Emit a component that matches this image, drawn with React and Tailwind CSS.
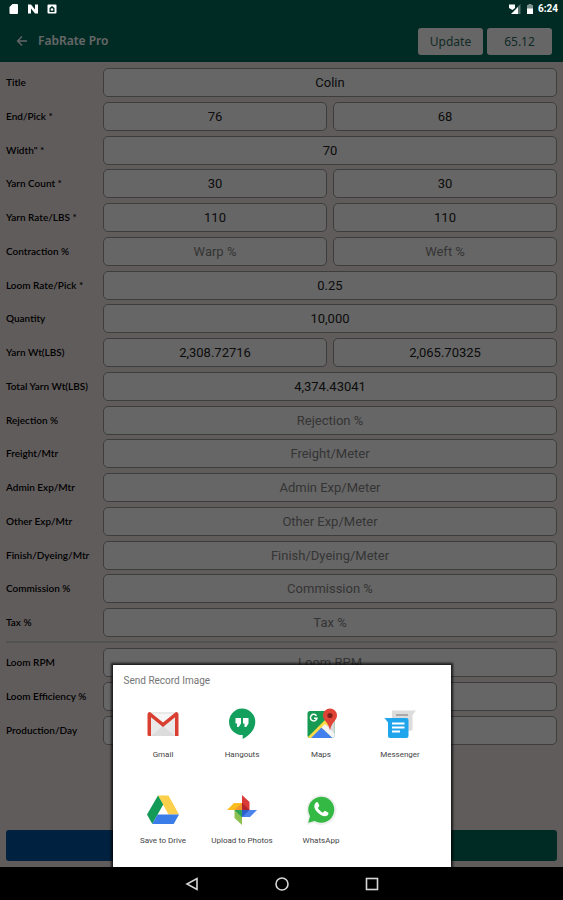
import { useState } from 'react';

const rateFields = [
  { label: 'Title', inputs: [{ value: 'Colin' }] },
  { label: 'End/Pick *', inputs: [{ value: '76' }, { value: '68' }] },
  { label: 'Width" *', inputs: [{ value: '70' }] },
  { label: 'Yarn Count *', inputs: [{ value: '30' }, { value: '30' }] },
  { label: 'Yarn Rate/LBS *', inputs: [{ value: '110' }, { value: '110' }] },
  { label: 'Contraction %', inputs: [{ hint: 'Warp %' }, { hint: 'Weft %' }] },
  { label: 'Loom Rate/Pick *', inputs: [{ value: '0.25' }] },
  { label: 'Quantity', inputs: [{ value: '10,000' }] },
  { label: 'Yarn Wt(LBS)', inputs: [{ value: '2,308.72716' }, { value: '2,065.70325' }] },
  { label: 'Total Yarn Wt(LBS)', inputs: [{ value: '4,374.43041' }] },
  { label: 'Rejection %', inputs: [{ hint: 'Rejection %' }] },
  { label: 'Freight/Mtr', inputs: [{ hint: 'Freight/Meter' }] },
  { label: 'Admin Exp/Mtr', inputs: [{ hint: 'Admin Exp/Meter' }] },
  { label: 'Other Exp/Mtr', inputs: [{ hint: 'Other Exp/Meter' }] },
  { label: 'Finish/Dyeing/Mtr', inputs: [{ hint: 'Finish/Dyeing/Meter' }] },
  { label: 'Commission %', inputs: [{ hint: 'Commission %' }] },
  { label: 'Tax %', inputs: [{ hint: 'Tax %' }] },
];

const loomFields = [
  { label: 'Loom RPM', inputs: [{ hint: 'Loom RPM' }] },
  { label: 'Loom Efficiency %', inputs: [{}] },
  { label: 'Production/Day', inputs: [{}] },
];

function Row({ label, inputs }) {
  const id = label.toLowerCase().replace(/[^a-z]+/g, '-');
  return (
    <div className="flex items-center">
      <label htmlFor={id} className="w-[97px] shrink-0 whitespace-nowrap font-[Lato,sans-serif] text-[10px] font-semibold text-black">{label}</label>
      <div className="flex flex-1 gap-1.5">
        {inputs.map((input, i) => (
          <Field key={i} id={i === 0 ? id : `${id}-${i}`} name={label} {...input} />
        ))}
      </div>
    </div>
  );
}

function Field({ id, name, value = '', hint }) {
  const [text, setText] = useState(value);
  return (
    <input
      id={id}
      aria-label={name}
      value={text}
      placeholder={hint}
      onChange={(e) => setText(e.target.value)}
      className="h-[29px] w-0 min-w-0 flex-1 rounded-[5px] border border-[#999999] bg-white text-center font-[Roboto,sans-serif] text-[13px] text-[#222222] placeholder:text-[#858585]"
    />
  );
}

function GmailIcon() {
  return (
    <svg viewBox="0 0 32 32" className="size-8">
      <rect x="1" y="4" width="30" height="24" rx="1.5" fill="#e9e9e9" />
      <path d="M4 28 16 18l12 10z" fill="#dcdcdc" />
      <path d="M4 6 16 17 28 6z" fill="#f6f6f6" />
      <path d="M0.500 6.500C.5 5 1.500 4 3 4l13 10.500L29 4c1.500 0 2.500 1 2.500 2.500V28H28V9.300L16 19 4 9.300V28H2A1.500 1.500 0 0 1 .5 26.500z" fill="#d93f31" />
    </svg>
  );
}

function HangoutsIcon() {
  return (
    <svg viewBox="0 0 32 32" className="size-8">
      <path d="M16 0.500a13.300 13.300 0 1 0 .7 26.600V31C24 27.500 29.300 21 29.300 13.800A13.300 13.300 0 0 0 16 .5z" fill="#12a05c" />
      <path d="M9.500 10h5.500v5.500L12.700 19h-1.700v-3.500H9.500zM17 10h5.500v5.500L20.200 19h-1.700v-3.500H17z" fill="#fff" />
    </svg>
  );
}

function MapsIcon() {
  return (
    <svg viewBox="0 0 32 32" className="size-8">
      <defs>
        <clipPath id="map-tile">
          <rect x="2.500" y="3" width="27" height="27" rx="2.500" />
        </clipPath>
      </defs>
      <g clipPath="url(#map-tile)">
        <path d="M2 2h28v28H2z" fill="#169a52" />
        <path d="M30 10v21L16.500 17.500z" fill="#d9d9dc" />
        <path d="M2 30 24 8l4 4L8 32z" fill="#fddb45" />
        <path d="M5.500 30.500 16.500 19.500 28 30.500z" fill="#4180ee" />
        <path d="M16.500 19.500 20 16l12 12v4h-2.500z" fill="#f4f4f4" />
      </g>
      <path d="M11.500 7.800A3.300 3.300 0 1 0 12 10.200H9" fill="none" stroke="#fff" strokeWidth="1.500" />
      <path d="M25 .5a7 7 0 0 0-7 7c0 5 5.500 6.500 7 15 1.500-8.500 7-10 7-15a7 7 0 0 0-7-7z" fill="#e04437" />
      <circle cx="25" cy="7.500" r="2.600" fill="#7d1f1a" />
    </svg>
  );
}

function MessengerIcon() {
  return (
    <svg viewBox="0 0 32 32" className="size-8">
      <path d="M8 2.500h24l-3.500 4.500v14a1.800 1.800 0 0 1-1.800 1.800H9.800A1.800 1.800 0 0 1 8 21z" fill="#dcdcdc" />
      <path d="M12 7h12" stroke="#999" strokeWidth="1.500" />
      <path d="M.5 10H22.500a2 2 0 0 1 2 2v16a2 2 0 0 1-2 2H6a2 2 0 0 1-2-2V14.500z" fill="#1fa5ec" />
      <path d="M8 15.500h12.500M8 19.500h12.500M8 23.500h8" stroke="#fff" strokeWidth="1.800" />
    </svg>
  );
}

function DriveIcon() {
  return (
    <svg viewBox="0 0 32 32" className="size-8">
      <path d="M11 1.500h10.500L32 20.500H21.500z" fill="#fdd04b" />
      <path d="M11 1.500 16.200 10.500 5.300 30 0 20.500z" fill="#139a57" />
      <path d="M10.500 20.500H32L26.700 30H5.300z" fill="#3b7de8" />
    </svg>
  );
}

function PhotosIcon() {
  return (
    <svg viewBox="0 0 32 32" className="size-8">
      <path d="M16 1l7.500 7v8H16z" fill="#db3b36" />
      <path d="M16 8.500 23.500 16H16z" fill="#b3272c" />
      <path d="M31 16l-7 7h-8v-7z" fill="#4a83ec" />
      <path d="M23.500 16 16 23v-7z" fill="#2c5fca" />
      <path d="M16 31l-7.500-7v-8H16z" fill="#8cc152" />
      <path d="M16 23.500 8.500 16H16z" fill="#2fa25a" />
      <path d="M1 16l7-7h8v7z" fill="#fbbc1f" />
      <path d="M8.500 16 16 9v7z" fill="#f2952a" />
    </svg>
  );
}

function WhatsAppIcon() {
  return (
    <svg viewBox="0 0 32 32" className="size-8">
      <path d="M1.500 31 3.500 23.500A15 15 0 1 1 9 29z" fill="#efefef" />
      <path d="M3.200 28.800 5 22.300A13 13 0 1 1 9.700 27z" fill="#33b944" />
      <path d="M11 8.500c.8-.8 1.700-.7 2.100.2l1.200 2.700c.3.700-1.300 2-1.300 2.500 0 .8 3.500 4.500 4.800 4.700.6.1 1.600-2 2.400-1.700l2.900 1.500c.8.400.2 2.300-.7 3-1.500 1.200-3.700 1-6.500-.4-3-1.500-5.500-4.500-6.300-6.900-.7-2.200-.2-4.200 1.400-5.600z" fill="#fff" />
    </svg>
  );
}

const apps = [
  { name: 'Gmail', Icon: GmailIcon },
  { name: 'Hangouts', Icon: HangoutsIcon },
  { name: 'Maps', Icon: MapsIcon },
  { name: 'Messenger', Icon: MessengerIcon },
  { name: 'Save to Drive', Icon: DriveIcon },
  { name: 'Upload to Photos', Icon: PhotosIcon },
  { name: 'WhatsApp', Icon: WhatsAppIcon },
];

function StatusBar() {
  return (
    <div className="absolute inset-x-0 top-0 z-10 flex h-[18px] items-center justify-between pl-[9px] pr-[5px] text-white">
      <div className="flex items-center gap-2">
        <svg viewBox="0 0 10 12" className="h-3 w-2.5" fill="currentColor">
          <path d="M3.500 1H8a1 1 0 0 1 1 1v8a1 1 0 0 1-1 1H1.500a1 1 0 0 1-1-1V4z" />
        </svg>
        <svg viewBox="0 0 12 12" className="size-3" fill="currentColor">
          <path d="M1 10.500v-9h3l4 5v-5h3v9H8l-4-5v5z" />
        </svg>
        <svg viewBox="0 0 10 12" className="h-3 w-2.5">
          <rect x="0.500" y="1.500" width="9" height="9" rx="1" fill="currentColor" />
          <path d="M2.500 5 5 3l2.500 2v4h-5z" fill="#002b25" />
          <circle cx="5" cy="6.500" r="1.300" fill="currentColor" />
        </svg>
      </div>
      <div className="flex items-center gap-1">
        <svg viewBox="0 0 14 12" className="h-3 w-3.5">
          <path d="M12.500 1v10H8V5.500z" fill="#59736f" />
          <path d="M10 4v7H3z" fill="currentColor" />
          <path d="M1 1.500h6v3.500L4.500 7 1 5z" fill="currentColor" />
        </svg>
        <svg viewBox="0 0 8 12" className="h-3 w-2">
          <path d="M1 2h1.500V1h3v1H7v9H1z" fill="#7d918e" />
          <path d="M1 5.500h6V11H1z" fill="currentColor" />
        </svg>
        <time className="font-[Roboto,sans-serif] text-[10px] font-bold leading-3">6:24</time>
      </div>
    </div>
  );
}

function ShareDialog() {
  return (
    <section role="dialog" aria-label="Send Record Image" className="w-[338px] bg-white px-[11px] pb-[21px] shadow-[0_0_2px_2px_rgba(0,0,0,0.7)]">
      <h2 className="pt-2 text-[10px] leading-4 text-[#757575]">Send Record Image</h2>
      <div className="grid grid-cols-4 gap-y-[34px] pt-[19px]">
        {apps.map(({ name, Icon }) => (
          <button key={name} className="flex flex-col items-center gap-2.5 whitespace-nowrap text-[8px] leading-[10px] text-[#444444]">
            <Icon />
            {name}
          </button>
        ))}
      </div>
    </section>
  );
}

export default function App() {
  return (
    <div className="relative flex h-screen min-h-[900px] flex-col bg-[#f0e6e6] font-['Noto_Sans',sans-serif]">
      <header className="flex h-[62px] items-end justify-between bg-[#006b5c] pb-[7px] pl-4 pr-[11px]">
        <div className="flex h-7 items-center gap-2.5">
          <button aria-label="Back">
            <svg viewBox="0 0 12 12" className="size-3" fill="none" stroke="#ffffff" strokeWidth="1.300">
              <path d="M11 6H1.500M6 1.500 1.500 6 6 10.500" />
            </svg>
          </button>
          <h1 className="text-[12px] font-semibold text-white">FabRate Pro</h1>
        </div>
        <div className="flex gap-1 text-[12px] text-[#2e6b62]">
          <button className="h-[27px] w-[65px] rounded-[3px] bg-white">Update</button>
          <button className="h-[27px] w-[65px] rounded-[3px] bg-white">65.12</button>
        </div>
      </header>

      <main className="flex flex-1 flex-col px-1.5">
        <div className="flex h-[575px] flex-col justify-between pt-1.5">
          {rateFields.map((f) => <Row key={f.label} {...f} />)}
        </div>
        <hr className="mt-1 mb-[5px] border-t-2 border-[#cccccc]" />
        <div className="flex flex-col gap-[5px]">
          {loomFields.map((f) => <Row key={f.label} {...f} />)}
        </div>
        <div className="mt-auto mb-1.5 flex gap-1.5">
          <button aria-label="Save" className="h-[31px] flex-1 rounded-[3px] bg-[#00539e]" />
          <button aria-label="Share" className="h-[31px] flex-1 rounded-[3px] bg-[#006b5c]" />
        </div>
      </main>

      <div className="absolute inset-0 flex items-end justify-center overflow-hidden bg-black/60 pb-[33px] font-[Roboto,sans-serif]">
        <ShareDialog />
      </div>
      <StatusBar />

      <nav className="relative flex h-[33px] items-center justify-center gap-[76px] bg-black">
        <button aria-label="Back">
          <svg viewBox="0 0 14 14" className="size-3.5" fill="none" stroke="#d6d6d6" strokeWidth="1.600">
            <path d="M12 1.500v11L2 7z" />
          </svg>
        </button>
        <button aria-label="Home">
          <svg viewBox="0 0 14 14" className="size-3.5" fill="none" stroke="#d6d6d6" strokeWidth="1.600">
            <circle cx="7" cy="7" r="6" />
          </svg>
        </button>
        <button aria-label="Recent apps">
          <svg viewBox="0 0 14 14" className="size-3.5" fill="none" stroke="#d6d6d6" strokeWidth="1.600">
            <rect x="1.500" y="1.500" width="11" height="11" />
          </svg>
        </button>
      </nav>
    </div>
  );
}
